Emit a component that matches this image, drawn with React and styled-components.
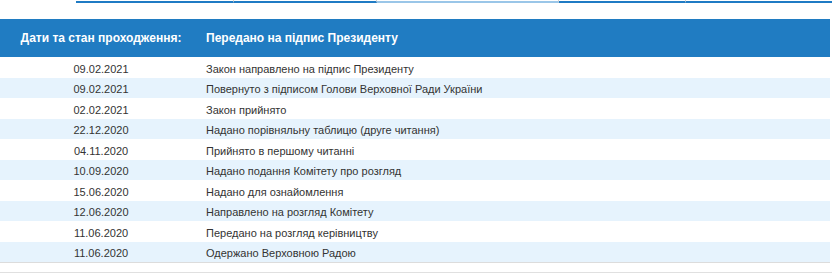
import React from "react";
import styled, { createGlobalStyle } from "styled-components";

const Global = createGlobalStyle`
  html, body { margin: 0; padding: 0; background: #fff; }
  body { font-family: "Liberation Sans", Arial, sans-serif; overflow: hidden; }
`;

const Page = styled.div`
  width: 832px;
  height: 274px;
  display: flex;
  flex-direction: column;
`;

const TabStrip = styled.div`
  display: flex;
  height: 3px;
  padding-left: 76px;
`;

const Tab = styled.div`
  width: ${(p) => (p.$w ? `${p.$w}px` : "auto")};
  flex: ${(p) => (p.$w ? "none" : "1")};
  height: 1px;
  border-bottom: 2px solid ${(p) => (p.$light ? "#9ac6e8" : "#1f7bc4")};
  border-right: ${(p) => (p.$sep ? "1px solid #d0d0d0" : "none")};
  box-sizing: content-box;
`;

const Table = styled.div`
  margin-top: 16px;
  width: 830px;
  border-bottom: 1px solid #dcdcdc;
`;

const HeadRow = styled.div`
  display: grid;
  grid-template-columns: 202px 1fr;
  align-items: center;
  height: 38px;
  background: #207cc2;
  color: #fff;
  font-weight: bold;
  font-size: 12px;
`;

const Row = styled.div`
  display: grid;
  grid-template-columns: 202px 1fr;
  align-items: center;
  box-sizing: border-box;
  height: 20.5px;
  padding-top: 4px;
  background: ${(p) => (p.$odd ? "#e6f3fd" : "#fff")};
  color: #333;
  font-size: 11px;
  line-height: 13px;
`;

const DateCell = styled.div`
  text-align: center;
`;

const TextCell = styled.div`
  padding-left: 4px;
  white-space: nowrap;
`;

const Rule = styled.div`
  margin-top: 9px;
  height: 1px;
  background: #e0e0e0;
  width: 832px;
`;

const rows = [
  ["09.02.2021", "Закон направлено на підпис Президенту"],
  ["09.02.2021", "Повернуто з підписом Голови Верховної Ради України"],
  ["02.02.2021", "Закон прийнято"],
  ["22.12.2020", "Надано порівняльну таблицю (друге читання)"],
  ["04.11.2020", "Прийнято в першому читанні"],
  ["10.09.2020", "Надано подання Комітету про розгляд"],
  ["15.06.2020", "Надано для ознайомлення"],
  ["12.06.2020", "Направлено на розгляд Комітету"],
  ["11.06.2020", "Передано на розгляд керівництву"],
  ["11.06.2020", "Одержано Верховною Радою"],
];

export default function App() {
  return (
    <Page>
      <Global />
      <TabStrip>
        <Tab $w={157} $sep />
        <Tab $w={142} $sep />
        <Tab $w={181} $light $sep />
        <Tab $w={126} $sep />
        <Tab />
      </TabStrip>
      <Table>
        <HeadRow>
          <DateCell>Дати та стан проходження:</DateCell>
          <TextCell>Передано на підпис Президенту</TextCell>
        </HeadRow>
        {rows.map(([d, t], i) => (
          <Row key={i} $odd={i % 2 === 1}>
            <DateCell>{d}</DateCell>
            <TextCell>{t}</TextCell>
          </Row>
        ))}
      </Table>
      <Rule />
    </Page>
  );
}
